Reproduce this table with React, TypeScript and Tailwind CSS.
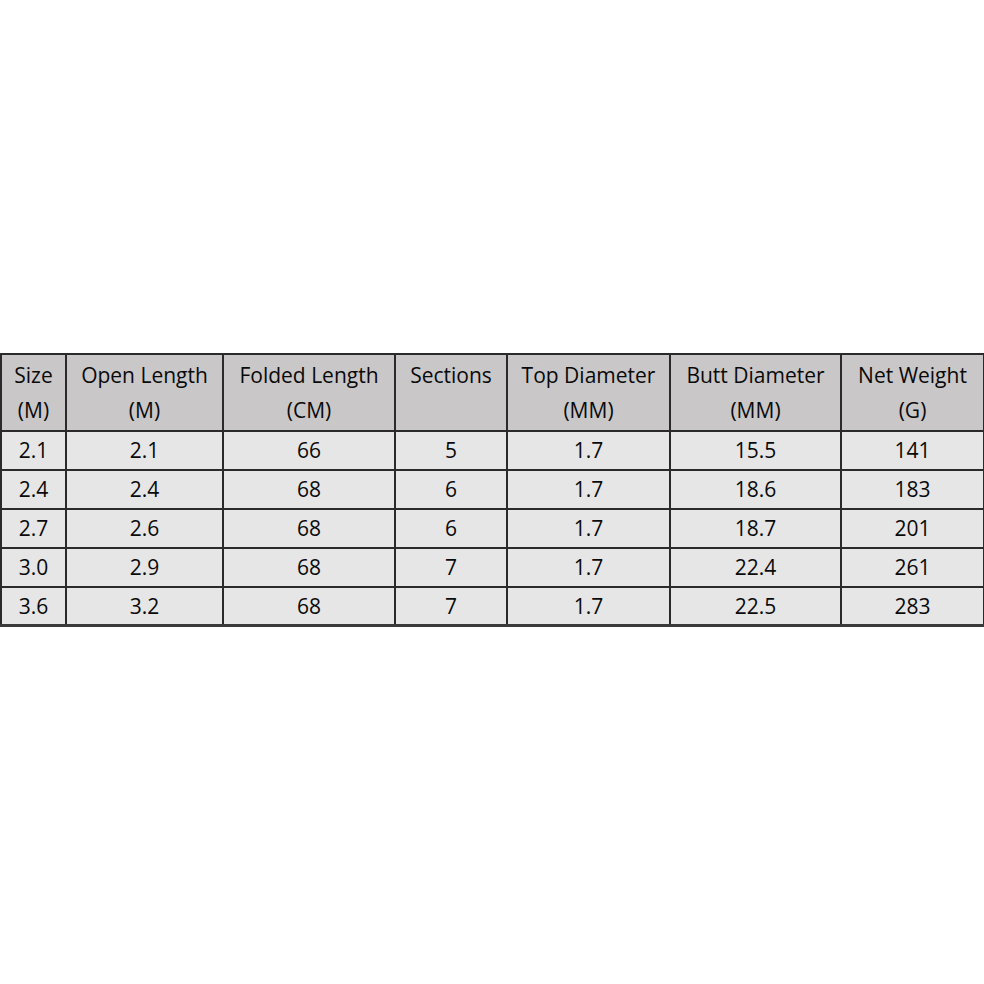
const headers: [string, string][] = [
  ['Size', '(M)'],
  ['Open Length', '(M)'],
  ['Folded Length', '(CM)'],
  ['Sections', ''],
  ['Top Diameter', '(MM)'],
  ['Butt Diameter', '(MM)'],
  ['Net Weight', '(G)'],
]

const rows = [
  ['2.1', '2.1', '66', '5', '1.7', '15.5', '141'],
  ['2.4', '2.4', '68', '6', '1.7', '18.6', '183'],
  ['2.7', '2.6', '68', '6', '1.7', '18.7', '201'],
  ['3.0', '2.9', '68', '7', '1.7', '22.4', '261'],
  ['3.6', '3.2', '68', '7', '1.7', '22.5', '283'],
]

const widths = ['w-[65px]', 'w-[157px]', 'w-[172px]', 'w-[112px]', 'w-[163px]', 'w-[171px]', 'w-[143px]']

export default function App() {
  return (
    <div className="w-[984px] h-[984px] bg-white flex items-center pb-[4px] font-['Open_Sans',sans-serif] text-[#0a0a0a]">
      <table className="border-collapse table-fixed w-[984px] border-b-[3px] border-[#3a3a3a]">
        <thead>
          <tr className="bg-[#c9c7c7] h-[77px]">
            {headers.map(([a, b], i) => (
              <th
                key={a}
                className={`${widths[i]} border-2 border-[#2a2a2a] align-top pt-[3px] text-[21px] font-medium leading-[35px] text-center`}
              >
                <div>{a}</div>
                {b && <div>{b}</div>}
              </th>
            ))}
          </tr>
        </thead>
        <tbody>
          {rows.map((r, ri) => (
            <tr key={ri} className="bg-[#e6e6e6] h-[39px]">
              {r.map((c, ci) => (
                <td key={ci} className="border-2 border-[#2a2a2a] text-center text-[21px] font-medium leading-[24px] p-0">
                  {c}
                </td>
              ))}
            </tr>
          ))}
        </tbody>
      </table>
    </div>
  )
}
